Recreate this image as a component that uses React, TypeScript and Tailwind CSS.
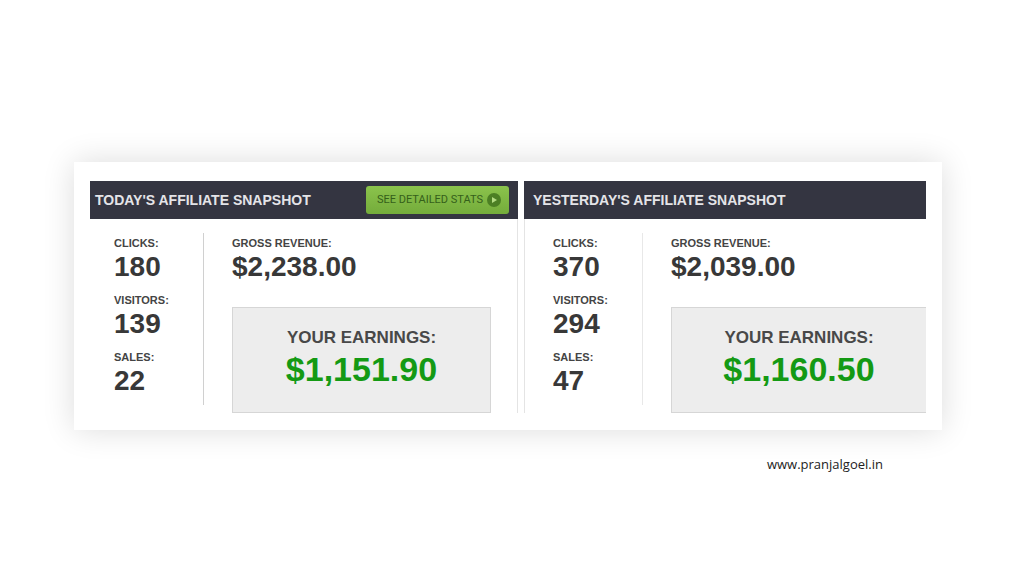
import React from 'react';

type Stat = {
  label: string;
  value: string;
};

type SnapshotProps = {
  title: string;
  stats: Stat[];
  revenue: string;
  earnings: string;
  className: string;
  headerClass: string;
  statsClass: string;
  detailsClass: string;
  earningsClass: string;
  action?: React.ReactNode;
};

const todayStats: Stat[] = [
  { label: 'CLICKS:', value: '180' },
  { label: 'VISITORS:', value: '139' },
  { label: 'SALES:', value: '22' },
];

const yesterdayStats: Stat[] = [
  { label: 'CLICKS:', value: '370' },
  { label: 'VISITORS:', value: '294' },
  { label: 'SALES:', value: '47' },
];

function StatItem({ label, value }: Stat) {
  return (
    <div>
      <dt className="text-[11px] leading-4 font-bold text-[#444444]">{label}</dt>
      <dd className="text-[28px] leading-8 font-bold text-[#383838]">{value}</dd>
    </div>
  );
}

function DetailsButton() {
  return (
    <button
      type="button"
      className="flex h-7 w-[143px] shrink-0 items-center justify-between rounded-[3px] bg-linear-to-b from-[#8bc34c] to-[#74ac3b] pr-2 pl-[11px] font-[Roboto,'Liberation_Sans',sans-serif] text-[11px] whitespace-nowrap text-[#35601a]"
    >
      SEE DETAILED STATS
      <svg viewBox="0 0 14 14" className="size-[14px]" aria-hidden="true">
        <circle cx="7" cy="7" r="7" fill="#4c7f24" />
        <path d="M5 4l5 3-5 3z" fill="#b4dc84" />
      </svg>
    </button>
  );
}

function Snapshot({
  title,
  stats,
  revenue,
  earnings,
  className,
  headerClass,
  statsClass,
  detailsClass,
  earningsClass,
  action,
}: SnapshotProps) {
  return (
    <section className={`flex min-w-0 flex-col ${className}`}>
      <header className={`flex h-[38px] items-center justify-between bg-[#343541] pr-[9px] ${headerClass}`}>
        <h2 className="text-sm font-bold whitespace-nowrap text-[#e4e4e8]">{title}</h2>
        {action}
      </header>
      <div className={`flex grow ${detailsClass}`}>
        <dl className={`mt-[14px] mb-2 flex shrink-0 flex-col gap-[9px] border-r pt-[2px] pb-2 ${statsClass}`}>
          {stats.map((stat) => (
            <StatItem key={stat.label} label={stat.label} value={stat.value} />
          ))}
        </dl>
        <div className="flex grow flex-col justify-between pt-4 pl-7">
          <dl>
            <StatItem label="GROSS REVENUE:" value={revenue} />
          </dl>
          <div
            className={`flex h-[106px] flex-col items-center border border-[#d6d6d6] bg-[#ededed] pt-[18px] font-bold ${earningsClass}`}
          >
            <p className="text-[17px] leading-6 text-[#484848]">YOUR EARNINGS:</p>
            <p className="text-[34px] leading-[38px] text-[#149a14]">{earnings}</p>
          </div>
        </div>
      </div>
    </section>
  );
}

export default function App() {
  return (
    <main className="min-h-screen bg-white pt-[162px] pr-[82px] pl-[74px] font-['Liberation_Sans',Arial,sans-serif]">
      <div className="flex gap-[6px] bg-white px-4 pt-[19px] pb-[17px] shadow-[0_0_30px_rgba(0,0,0,0.14)]">
        <Snapshot
          title="TODAY'S AFFILIATE SNAPSHOT"
          stats={todayStats}
          revenue="$2,238.00"
          earnings="$1,151.90"
          className="flex-[428]"
          headerClass="pl-[5px]"
          statsClass="w-[114px] border-[#d0d0d0] pl-6"
          detailsClass="border-r border-[#e4e4e4] pr-[26px]"
          earningsClass=""
          action={<DetailsButton />}
        />
        <Snapshot
          title="YESTERDAY'S AFFILIATE SNAPSHOT"
          stats={yesterdayStats}
          revenue="$2,039.00"
          earnings="$1,160.50"
          className="flex-[402]"
          headerClass="pl-[9px]"
          statsClass="w-[118px] border-[#e8e8e8] pl-7"
          detailsClass="border-l border-[#e4e4e4]"
          earningsClass="border-r-0"
        />
      </div>
      <footer className="flex justify-end pt-6 pr-[59px]">
        <a
          href="https://www.pranjalgoel.in"
          className="font-['Open_Sans','Noto_Sans',sans-serif] text-[13px] leading-5 text-[#222222]"
        >
          www.pranjalgoel.in
        </a>
      </footer>
    </main>
  );
}
